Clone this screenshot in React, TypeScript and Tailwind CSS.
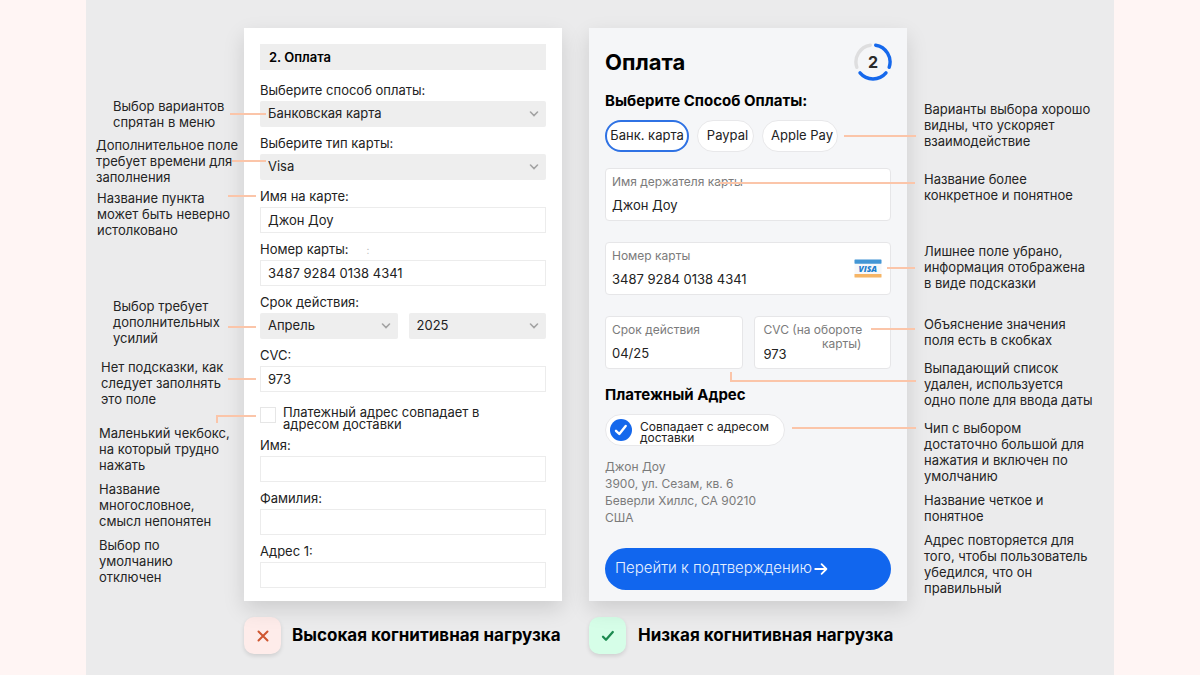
import type { ReactNode } from 'react';

type Note = { text: string; place: string };

const leftNotes: Note[] = [
  { text: 'Выбор вариантов\nспрятан в меню', place: 'ml-[27px]' },
  { text: 'Дополнительное поле\nтребует времени для\nзаполнения', place: 'mt-[7px] ml-[10px]' },
  { text: 'Название пункта\nможет быть неверно\nистолковано', place: 'mt-[5px] ml-[11px]' },
  { text: 'Выбор требует\nдополнительных\nусилий', place: 'mt-[60px] ml-[27px]' },
  { text: 'Нет подсказки, как\nследует заполнять\nэто поле', place: 'mt-[13px] ml-[15px]' },
  { text: 'Маленький чекбокс,\nна который трудно\nнажать', place: 'mt-[18px] ml-[13px]' },
  { text: 'Название\nмногословное,\nсмысл непонятен', place: 'mt-2 ml-[13px]' },
  { text: 'Выбор по\nумолчанию\nотключен', place: 'mt-2 ml-[13px]' },
];

const rightNotes: Note[] = [
  { text: 'Варианты выбора хорошо\nвидны, что ускоряет\nвзаимодействие', place: '' },
  { text: 'Название более\nконкретное и понятное', place: 'mt-[22px]' },
  { text: 'Лишнее поле убрано,\nинформация отображена\nв виде подсказки', place: 'mt-10' },
  { text: 'Объяснение значения\nполя есть в скобках', place: 'mt-[25px]' },
  { text: 'Выпадающий список\nудален, используется\nодно поле для ввода даты', place: 'mt-3' },
  { text: 'Чип с выбором\nдостаточно большой для\nнажатия и включен по\nумолчанию', place: 'mt-3' },
  { text: 'Название четкое и\nпонятное', place: 'mt-2' },
  { text: 'Адрес повторяется для\nтого, чтобы пользователь\nубедился, что он\nправильный', place: 'mt-2' },
];

function Notes({ notes, className }: { notes: Note[]; className: string }) {
  return (
    <aside className={`flex flex-col text-[13px] leading-4 text-[#242424] ${className}`}>
      {notes.map((n) => (
        <p key={n.text} className={`whitespace-pre ${n.place}`}>
          {n.text}
        </p>
      ))}
    </aside>
  );
}

function Line({ className }: { className: string }) {
  return <span aria-hidden="true" className={`pointer-events-none absolute z-10 border-[#fbc5a9] ${className}`} />;
}

function OldField({ id, label, children }: { id: string; label: ReactNode; children: ReactNode }) {
  return (
    <div className="relative">
      <label htmlFor={id} className="block h-[22px] text-[13px] leading-[22px]">
        {label}
      </label>
      {children}
    </div>
  );
}

function OldInput({ id, value = '' }: { id: string; value?: string }) {
  return (
    <input
      id={id}
      defaultValue={value}
      className="block h-[26px] w-full border border-[#ececec] bg-white px-[7px] text-[13px] outline-none"
    />
  );
}

function OldSelect({ id, value, label }: { id?: string; value: string; label?: string }) {
  return (
    <div className="relative min-w-0 flex-1">
      <select
        id={id}
        aria-label={label}
        className="block h-[26px] w-full appearance-none rounded-[2px] bg-[#eeeeee] px-2 text-[13px] outline-none"
      >
        <option>{value}</option>
      </select>
      <svg viewBox="0 0 10 6" className="pointer-events-none absolute top-[10px] right-[7px] h-[6px] w-[10px]">
        <path d="M1.5 1 5 4.5 8.5 1" fill="none" stroke="#a3a3a3" strokeWidth="1.6" strokeLinecap="round" />
      </svg>
    </div>
  );
}

function NewField({ id, label, value, children }: { id: string; label: string; value: string; children?: ReactNode }) {
  return (
    <div className="relative h-[53px] min-w-0 rounded-[4px] border border-[#e6e6e8] bg-white px-[6px] pt-[5px]">
      <label htmlFor={id} className="block text-xs leading-4 text-[#7b7b7b]">
        {label}
      </label>
      <input id={id} defaultValue={value} className="mt-[3px] block h-6 w-full bg-transparent text-[13px] outline-none" />
      {children}
    </div>
  );
}

function StepRing() {
  return (
    <div className="relative -mr-[2px] flex size-10 items-center justify-center">
      <svg viewBox="0 0 40 40" className="absolute inset-0" fill="none" strokeWidth="3.4" strokeLinecap="round">
        <path d="M22.7 3.2A17 17 0 0 1 36.2 25.3" stroke="#1568ec" />
        <path d="M33 30.9A17 17 0 0 1 7 30.9" stroke="#1568ec" />
        <path d="M3.8 25.3A17 17 0 0 1 17.3 3.2" stroke="#dededf" />
      </svg>
      <span className="text-base font-bold text-[#2a2a2a]">2</span>
    </div>
  );
}

function VisaLogo() {
  return (
    <svg viewBox="0 0 28 19" className="absolute top-4 right-2 h-[19px] w-7" role="img" aria-label="Visa">
      <rect x="0.5" y="0.5" width="27" height="18" rx="1" fill="#f7f8fa" />
      <rect x="0.5" y="0.5" width="27" height="4.2" rx="0.6" fill="#4396d5" />
      <rect x="0.5" y="15" width="27" height="3.6" rx="0.6" fill="#f6b566" />
      <text x="13.8" y="13.2" textAnchor="middle" fontSize="8.5" fontWeight="800" fontStyle="italic" fontFamily="Open Sans, sans-serif" fill="#1f7fce">
        VISA
      </text>
    </svg>
  );
}

const cardShadow = 'shadow-[0_8px_20px_rgba(0,0,0,0.13)]';

function OldForm() {
  return (
    <form className={`relative flex flex-col gap-[5px] bg-white px-4 pt-4 pb-[13px] text-[#222] ${cardShadow}`}>
      <h2 className="mb-1 h-[26px] bg-[#eeeeee] px-[9px] text-[13px] leading-[26px] font-semibold text-black">2. Оплата</h2>
      <OldField id="method" label="Выберите способ оплаты:">
        <OldSelect id="method" value="Банковская карта" />
        <Line className="top-[34px] -left-[30px] w-9 border-t-2" />
      </OldField>
      <OldField id="type" label="Выберите тип карты:">
        <OldSelect id="type" value="Visa" />
        <Line className="top-7 -left-7 w-[34px] border-t-2" />
      </OldField>
      <OldField id="name" label="Имя на карте:">
        <OldInput id="name" value="Джон Доу" />
        <Line className="top-[10px] -left-8 w-7 border-t-2" />
      </OldField>
      <OldField
        id="number"
        label={
          <>
            Номер карты:<span aria-hidden="true" className="ml-[18px] text-[10px] text-[#bbb]">:</span>
          </>
        }
      >
        <OldInput id="number" value="3487 9284 0138 4341" />
      </OldField>
      <OldField id="month" label="Срок действия:">
        <div className="flex gap-[11px]">
          <OldSelect id="month" value="Апрель" />
          <OldSelect label="Год" value="2025" />
        </div>
        <Line className="top-[35px] -left-8 w-7 border-t-2" />
      </OldField>
      <OldField id="cvc" label="CVC:">
        <OldInput id="cvc" value="973" />
        <Line className="top-[34px] -left-8 w-7 border-t-2" />
      </OldField>
      <div className="relative flex h-8 items-start gap-[7px] pt-[9px]">
        <input id="same" type="checkbox" className="mt-px size-4 shrink-0 appearance-none border border-[#e6e6e6] bg-white" />
        <label htmlFor="same" className="text-[13px] leading-3 whitespace-pre">
          {'Платежный адрес совпадает в\nадресом доставки'}
        </label>
        <Line className="top-[18px] -left-11 h-2 w-10 border-t-2 border-l-2" />
      </div>
      <OldField id="first" label="Имя:">
        <OldInput id="first" />
      </OldField>
      <OldField id="last" label="Фамилия:">
        <OldInput id="last" />
      </OldField>
      <OldField id="addr" label="Адрес 1:">
        <OldInput id="addr" />
      </OldField>
    </form>
  );
}

function NewForm() {
  return (
    <form className={`relative flex flex-col bg-[#f5f6f8] px-4 pt-[14px] pb-[11px] text-[#222] ${cardShadow}`}>
      <div className="flex items-center justify-between">
        <h2 className="text-[22px] font-bold text-black">Оплата</h2>
        <StepRing />
      </div>
      <h3 className="mt-2 text-[15px] leading-[22px] font-bold text-black">Выберите Способ Оплаты:</h3>
      <div className="relative mt-2 flex gap-2 text-[13px] whitespace-nowrap">
        <button type="button" aria-pressed="true" className="flex h-8 w-[84px] items-center justify-center rounded-full border-2 border-[#2f72e4] bg-white">
          Банк. карта
        </button>
        <button type="button" className="h-8 w-[57px] rounded-full border border-[#e8e8ea] bg-white pl-1">
          Paypal
        </button>
        <button type="button" className="h-8 w-[76px] rounded-full border border-[#e8e8ea] bg-white pl-1">
          Apple Pay
        </button>
        <Line className="top-[15px] -right-[25px] w-[72px] border-t-2" />
      </div>
      <div className="mt-4 flex flex-col gap-[21px]">
        <NewField id="holder" label="Имя держателя карты" value="Джон Доу">
          <Line className="top-[13px] -right-[25px] w-[196px] border-t-2" />
        </NewField>
        <NewField id="card" label="Номер карты" value="3487 9284 0138 4341">
          <VisaLogo />
          <Line className="top-6 -right-[25px] w-7 border-t-2" />
        </NewField>
        <div className="grid grid-cols-2 gap-[11px]">
          <NewField id="exp" label="Срок действия" value="04/25">
            <Line className="top-[55px] left-[124px] h-[10px] w-[186px] border-b-2 border-l-2" />
          </NewField>
          <div className="relative h-[53px] min-w-0 rounded-[4px] border border-[#e6e6e8] bg-white px-[9px] pt-[6px]">
            <label htmlFor="code" className="block w-[98px] text-right text-xs leading-[14px] whitespace-pre text-[#7b7b7b]">
              {'CVC (на обороте\nкарты)'}
            </label>
            <input id="code" defaultValue="973" className="-mt-[7px] block h-5 w-12 bg-transparent text-[13px] outline-none" />
            <Line className="top-[11px] -right-[25px] w-11 border-t-2" />
          </div>
        </div>
      </div>
      <h3 className="mt-[15px] text-[15px] leading-[22px] font-bold text-black">Платежный Адрес</h3>
      <div className="relative mt-2 flex">
        <div className="flex h-8 w-[180px] items-center gap-2 rounded-full border border-[#e8e8ea] bg-white pl-1">
          <span className="relative size-[22px] shrink-0">
            <input id="delivery" type="checkbox" defaultChecked className="block size-[22px] appearance-none rounded-full bg-[#1568ec]" />
            <svg viewBox="0 0 22 22" className="pointer-events-none absolute inset-0">
              <path d="m6 11.8 3.3 3.2 6.4-8" fill="none" stroke="#fff" strokeWidth="2.4" strokeLinecap="round" strokeLinejoin="round" />
            </svg>
          </span>
          <label htmlFor="delivery" className="mt-1 text-xs leading-[11px] whitespace-pre">
            {'Совпадает с адресом\nдоставки'}
          </label>
        </div>
        <Line className="top-[13px] -right-[25px] w-[124px] border-t-2" />
      </div>
      <address className="mt-3 text-xs leading-[17px] whitespace-pre text-[#7b7b7b] not-italic">
        {'Джон Доу\n3900, ул. Сезам, кв. 6\nБеверли Хиллс, CA 90210\nСША'}
      </address>
      <button type="button" className="mt-auto flex h-[42px] items-center rounded-full bg-[#1166ee] pb-px pl-[10px] text-[15px] font-light whitespace-nowrap text-[#e6f0ff]">
        Перейти к подтверждению
        <svg viewBox="0 0 14 14" className="ml-[2px] size-[14px]">
          <path d="M1.2 7H12.4M7.6 2.2 12.4 7l-4.8 4.8" fill="none" stroke="#fff" strokeWidth="1.8" strokeLinecap="round" strokeLinejoin="round" />
        </svg>
      </button>
    </form>
  );
}

export default function App() {
  return (
    <div className="min-h-screen bg-[#fff5f4] font-['Inter',sans-serif]">
      <main className="mx-auto grid min-h-screen w-full max-w-[1028px] grid-cols-[158px_331fr_332fr_207px] grid-rows-[auto_1fr] overflow-hidden bg-[#ebebec] pt-7">
        <Notes notes={leftNotes} className="pt-[70px]" />
        <div className="flex min-w-0 flex-col pr-[13px]">
          <OldForm />
        </div>
        <div className="grid min-w-0 pl-[14px]">
          <NewForm />
        </div>
        <Notes notes={rightNotes} className="pt-[73px] pl-[17px]" />
        <div className="col-start-2 mt-4 flex min-w-0 items-start">
          <span className="flex size-[37px] shrink-0 items-center justify-center rounded-[10px] bg-[#feecea] shadow-[0_2px_4px_rgba(0,0,0,0.12)]">
            <svg viewBox="0 0 12 12" className="size-3">
              <path d="m1.5 1.5 9 9m0-9-9 9" stroke="#cf5630" strokeWidth="2" strokeLinecap="round" />
            </svg>
          </span>
          <h1 className="ml-[11px] text-[17px] leading-[37px] font-bold whitespace-nowrap text-black">Высокая когнитивная нагрузка</h1>
        </div>
        <div className="mt-4 flex min-w-0 items-start pl-[14px]">
          <span className="flex size-[37px] shrink-0 items-center justify-center rounded-[10px] bg-[#d6fee8] shadow-[0_2px_4px_rgba(0,0,0,0.12)]">
            <svg viewBox="0 0 14 12" className="h-3 w-[14px]">
              <path d="m2 6.8 3 3L11.8 2" fill="none" stroke="#1c8a50" strokeWidth="2.3" strokeLinecap="round" strokeLinejoin="round" />
            </svg>
          </span>
          <h1 className="ml-3 text-[17px] leading-[37px] font-bold whitespace-nowrap text-black">Низкая когнитивная нагрузка</h1>
        </div>
      </main>
    </div>
  );
}
